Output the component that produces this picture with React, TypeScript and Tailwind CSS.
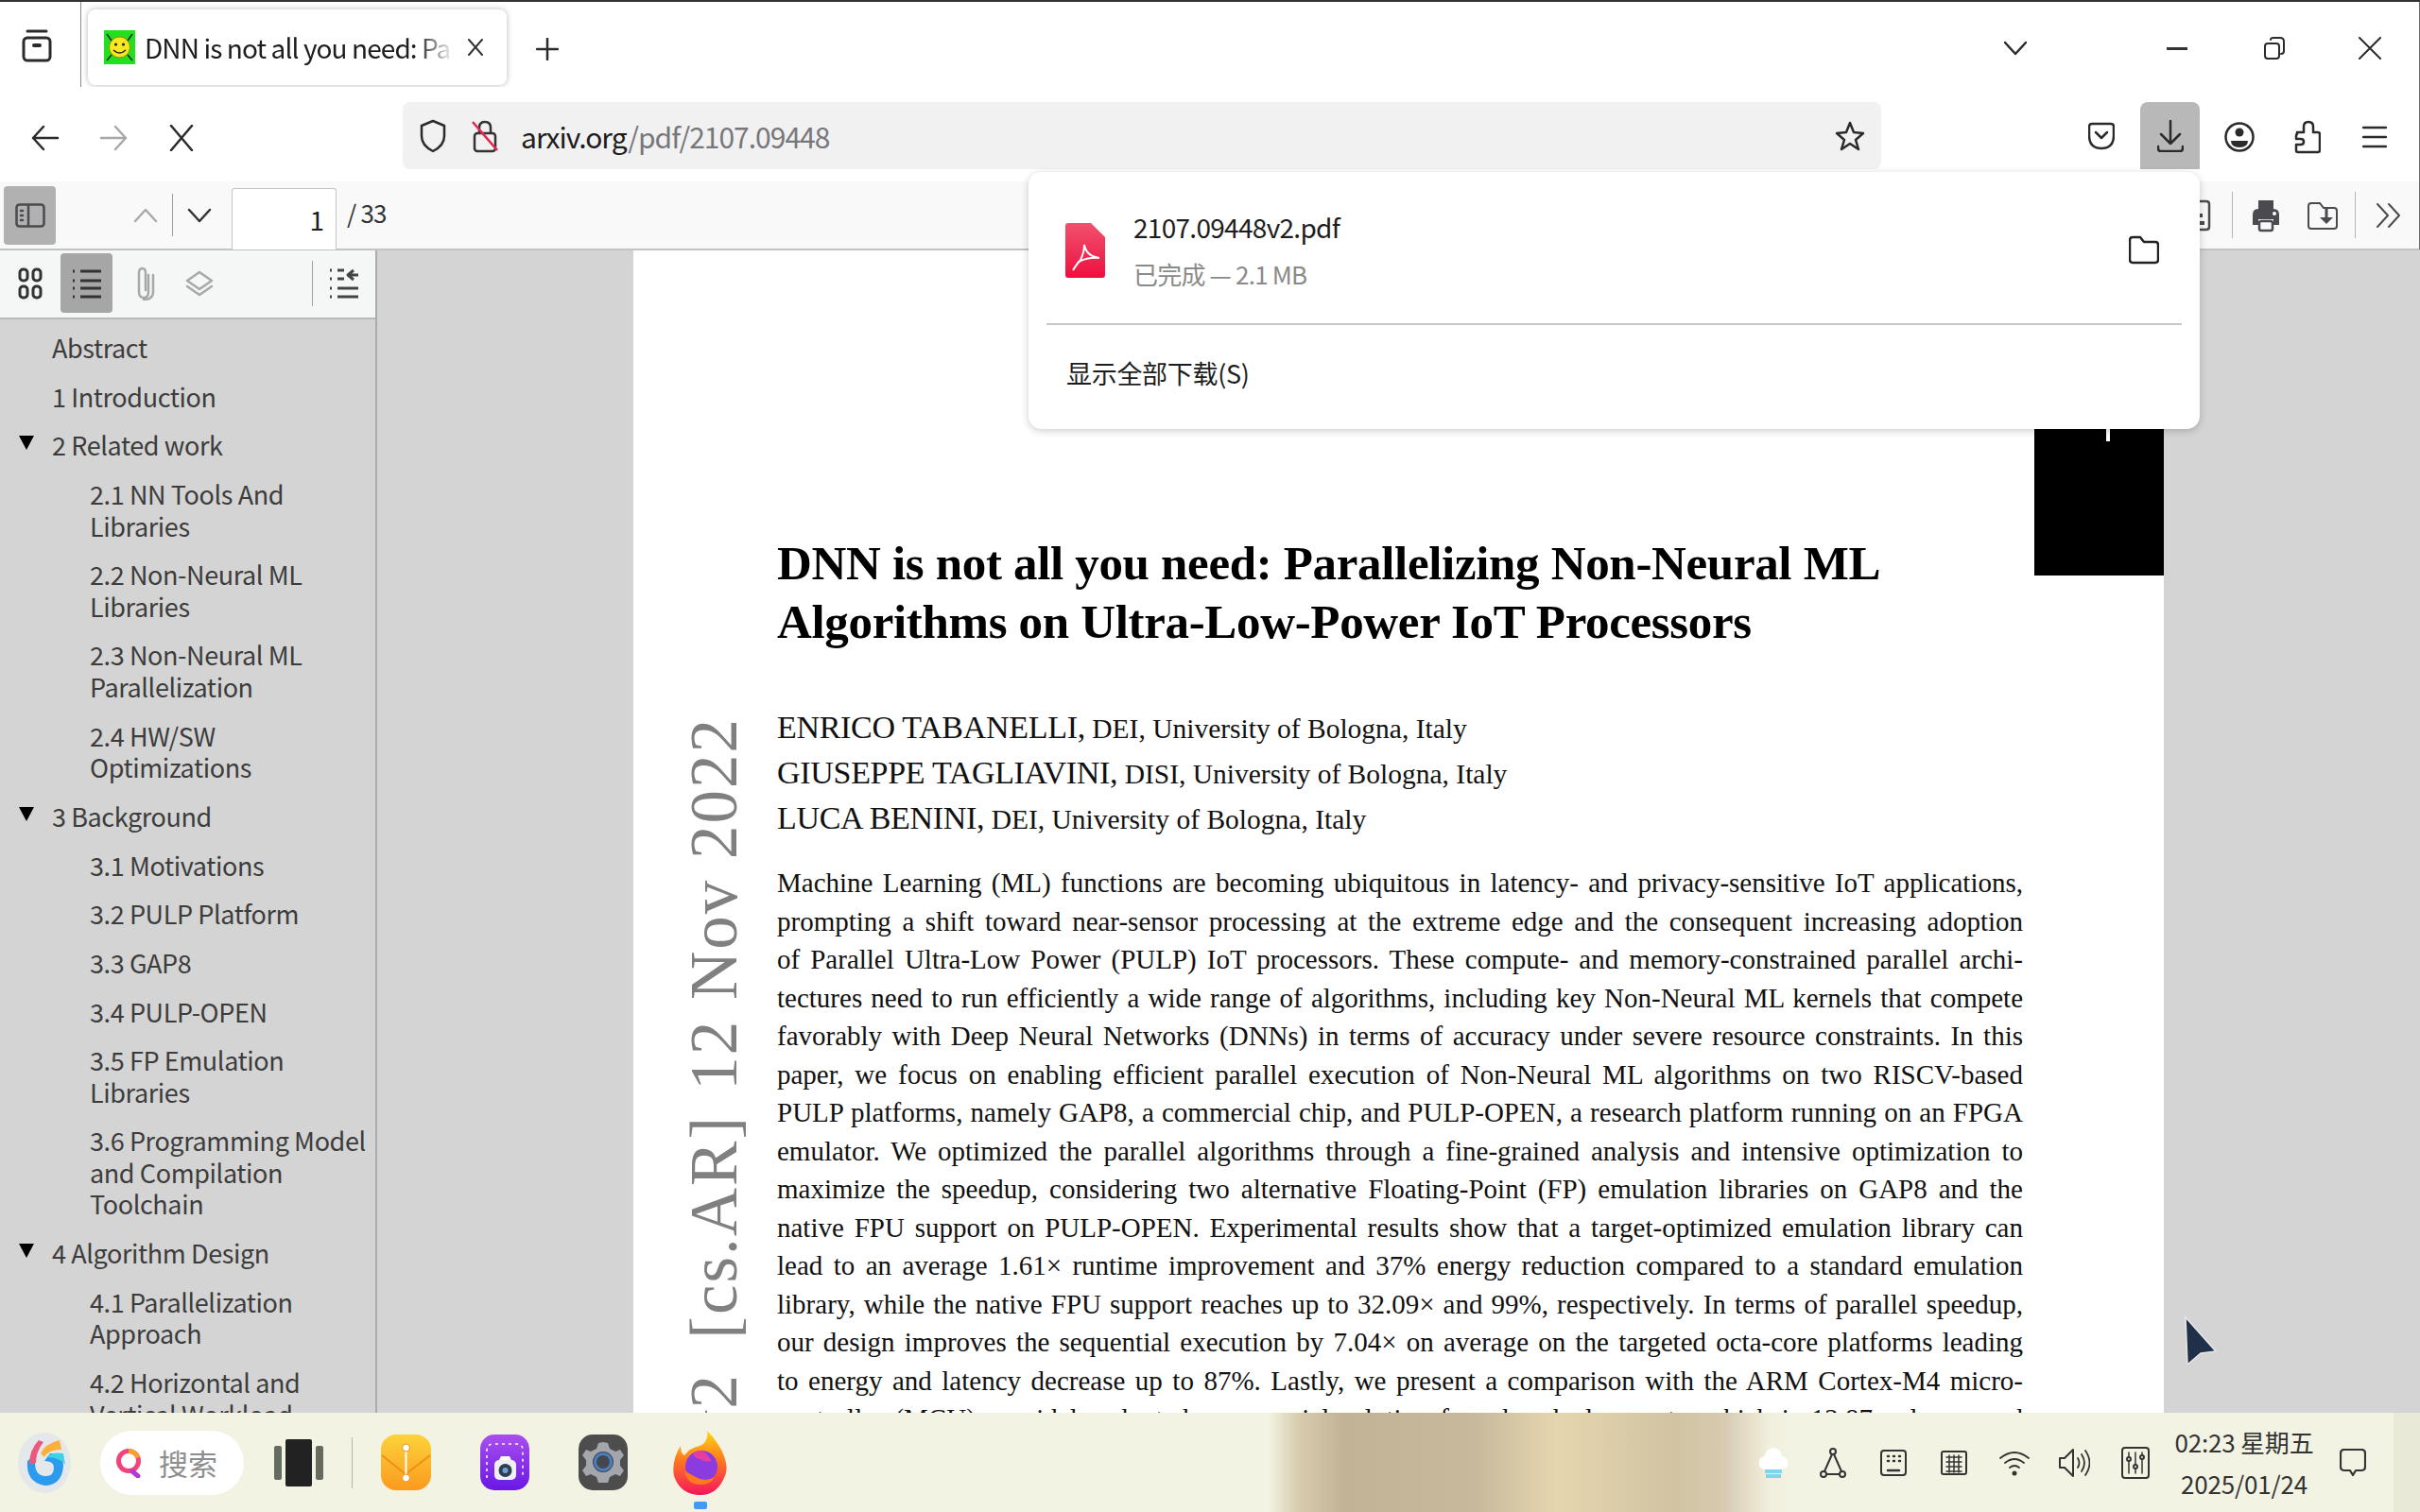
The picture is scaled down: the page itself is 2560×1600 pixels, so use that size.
import { ReactNode } from "react";

const UI_FONT = "font-['Noto_Sans_CJK_SC','Noto_Sans',sans-serif]";

type Toc = { label: string[]; depth: 0 | 1; open?: boolean };

const toc: Toc[] = [
  { label: ["Abstract"], depth: 0 },
  { label: ["1 Introduction"], depth: 0 },
  { label: ["2 Related work"], depth: 0, open: true },
  { label: ["2.1 NN Tools And", "Libraries"], depth: 1 },
  { label: ["2.2 Non-Neural ML", "Libraries"], depth: 1 },
  { label: ["2.3 Non-Neural ML", "Parallelization"], depth: 1 },
  { label: ["2.4 HW/SW", "Optimizations"], depth: 1 },
  { label: ["3 Background"], depth: 0, open: true },
  { label: ["3.1 Motivations"], depth: 1 },
  { label: ["3.2 PULP Platform"], depth: 1 },
  { label: ["3.3 GAP8"], depth: 1 },
  { label: ["3.4 PULP-OPEN"], depth: 1 },
  { label: ["3.5 FP Emulation", "Libraries"], depth: 1 },
  { label: ["3.6 Programming Model", "and Compilation", "Toolchain"], depth: 1 },
  { label: ["4 Algorithm Design"], depth: 0, open: true },
  { label: ["4.1 Parallelization", "Approach"], depth: 1 },
  { label: ["4.2 Horizontal and", "Vertical Workload"], depth: 1 },
];

const abstractLines = [
  "Machine Learning (ML) functions are becoming ubiquitous in latency- and privacy-sensitive IoT applications,",
  "prompting a shift toward near-sensor processing at the extreme edge and the consequent increasing adoption",
  "of Parallel Ultra-Low Power (PULP) IoT processors. These compute- and memory-constrained parallel archi-",
  "tectures need to run efficiently a wide range of algorithms, including key Non-Neural ML kernels that compete",
  "favorably with Deep Neural Networks (DNNs) in terms of accuracy under severe resource constraints. In this",
  "paper, we focus on enabling efficient parallel execution of Non-Neural ML algorithms on two RISCV-based",
  "PULP platforms, namely GAP8, a commercial chip, and PULP-OPEN, a research platform running on an FPGA",
  "emulator. We optimized the parallel algorithms through a fine-grained analysis and intensive optimization to",
  "maximize the speedup, considering two alternative Floating-Point (FP) emulation libraries on GAP8 and the",
  "native FPU support on PULP-OPEN. Experimental results show that a target-optimized emulation library can",
  "lead to an average 1.61× runtime improvement and 37% energy reduction compared to a standard emulation",
  "library, while the native FPU support reaches up to 32.09× and 99%, respectively. In terms of parallel speedup,",
  "our design improves the sequential execution by 7.04× on average on the targeted octa-core platforms leading",
  "to energy and latency decrease up to 87%. Lastly, we present a comparison with the ARM Cortex-M4 micro-",
  "controller (MCU), a widely adopted commercial solution for edge deployments, which is 12.87× slower and",
];

function Icon({ w, h, box, children, className = "" }: { w: number; h: number; box: string; children: ReactNode; className?: string }) {
  return (
    <svg width={w} height={h} viewBox={box} fill="none" stroke="currentColor" strokeWidth="2" strokeLinecap="round" strokeLinejoin="round" className={`shrink-0 ${className}`}>
      {children}
    </svg>
  );
}

function TabBar() {
  return (
    <div className="flex h-[90px] shrink-0 items-start bg-white">
      <div className="flex h-[95px] w-[86px] shrink-0 items-center justify-center border-r border-[#8c8c8c] pr-[8px] text-[#2b2b2b]">
        <Icon w={32} h={36} box="0 0 32 36" className="mb-[4px]">
          <path d="M6 3h20" strokeWidth="3" />
          <rect x="2" y="10" width="28" height="24" rx="4" strokeWidth="3" />
          <path d="M13 18h6" strokeWidth="4" />
        </Icon>
      </div>
      <div className="mt-[8px] ml-[7px] flex h-[80px] w-[443px] shrink-0 items-center rounded-[8px] bg-white pl-[17px] shadow-[0_0_6px_rgba(0,0,0,0.28)]">
        <svg width="33" height="36" viewBox="0 0 33 36" className="shrink-0">
          <rect width="33" height="36" fill="#22e01c" />
          <circle cx="16.5" cy="18" r="11" fill="#f7e81f" stroke="#8c8a10" />
          <circle cx="12.5" cy="15" r="1.6" fill="#222" />
          <circle cx="20.5" cy="15" r="1.6" fill="#222" />
          <path d="M10 21q6.5 6 13 0" stroke="#222" strokeWidth="1.5" fill="none" />
          <path d="M3 4l5 7M30 4l-5 7M3 32l5-6M30 32l-5-6" stroke="#224" strokeWidth="1.5" />
        </svg>
        <span className={`ml-[10px] w-[327px] shrink-0 overflow-hidden whitespace-nowrap text-[28px] leading-[40px] tracking-[-0.9px] text-[#1d1d1d] [mask-image:linear-gradient(90deg,#000_88%,transparent_100%)] ${UI_FONT}`}>
          DNN is not all you need: Parallelizing
        </span>
        <Icon w={18} h={18} box="0 0 18 18" className="ml-[14px] text-[#333]">
          <path d="M2 1l14 16M16 1L2 17" />
        </Icon>
      </div>
      <div className="mt-[38px] ml-[31px] text-[#2b2b2b]">
        <Icon w={24} h={24} box="0 0 24 24">
          <path d="M12 1v22M1 12h22" strokeWidth="2.5" />
        </Icon>
      </div>
      <div className="mt-[36px] ml-auto flex items-center text-[#2b2b2b]">
        <Icon w={24} h={16} box="0 0 24 16">
          <path d="M1 2l11 12L23 2" strokeWidth="2.5" />
        </Icon>
        <div className="ml-[148px] h-[3px] w-[22px] self-center bg-[#333]" />
        <Icon w={24} h={26} box="0 0 24 26" className="ml-[80px]">
          <rect x="2" y="8" width="15" height="16" rx="3" />
          <path d="M8 4q0-2 3-2h7q4 0 4 4v10q0 3-3 3" />
        </Icon>
        <Icon w={24} h={24} box="0 0 24 24" className="ml-[77px] mr-[41px]">
          <path d="M1 1l22 22M23 1L1 23" />
        </Icon>
      </div>
    </div>
  );
}

function NavBar() {
  return (
    <div className="flex h-[100px] shrink-0 items-start bg-white text-[#2b2b2b]">
      <div className="ml-[33px] mt-[40px] flex items-center">
        <Icon w={30} h={28} box="0 0 30 28">
          <path d="M28 14H2M13 2L2 14l11 12" strokeWidth="2.5" />
        </Icon>
        <Icon w={30} h={28} box="0 0 30 28" className="ml-[42px] text-[#a8a8a8]">
          <path d="M2 14h26M17 2l11 12-11 12" strokeWidth="2.5" />
        </Icon>
        <Icon w={26} h={28} box="0 0 26 28" className="ml-[44px]">
          <path d="M2 1l22 26M24 1L2 27" strokeWidth="2.5" />
        </Icon>
      </div>
      <div className="ml-[221px] mt-[16px] flex h-[71px] w-[1564px] shrink-0 items-center rounded-[8px] bg-[#f1f1f2] pl-[17px]">
        <Icon w={30} h={36} box="0 0 30 36">
          <path d="M15 2l12 5v11q0 10-12 16Q3 28 3 18V7z" strokeWidth="2.5" />
        </Icon>
        <svg width="30" height="36" viewBox="0 0 30 36" fill="none" className="ml-[25px] shrink-0">
          <rect x="4" y="15" width="22" height="19" rx="3" stroke="#333" strokeWidth="2.5" />
          <path d="M9 15V9q0-6 6-6t6 6v6" stroke="#333" strokeWidth="2.5" />
          <path d="M2 3l26 30" stroke="#e22850" strokeWidth="2.5" />
        </svg>
        <span className={`ml-[23px] text-[30px] leading-[44px] tracking-[-1px] text-[#1d1d1d] ${UI_FONT}`}>
          arxiv.org<span className="text-[#77777b]">/pdf/2107.09448</span>
        </span>
        <Icon w={32} h={34} box="0 0 32 34" className="ml-auto mr-[17px]">
          <path d="M16 3l4 10 10 1-8 7 3 10-9-6-9 6 3-10-8-7 10-1z" strokeWidth="2.5" />
        </Icon>
      </div>
      <div className="ml-[219px] mt-[37px] shrink-0">
        <Icon w={28} h={30} box="0 0 28 30">
          <path d="M4 2h20q3 0 3 3v9q0 14-13 14T1 14V5q0-3 3-3z" strokeWidth="2.5" />
          <path d="M8 11l6 6 6-6" strokeWidth="2.5" />
        </Icon>
      </div>
      <div className="ml-[27px] mt-[16px] flex h-[71px] w-[63px] shrink-0 items-center justify-center rounded-t-[8px] bg-[#b8b8b8]">
        <Icon w={28} h={34} box="0 0 28 34">
          <path d="M14 1v24M4 15l10 10 10-10M1 28v2q0 3 3 3h20q3 0 3-3v-2" strokeWidth="2.5" />
        </Icon>
      </div>
      <div className="ml-[26px] mt-[35px] flex shrink-0 items-center">
        <svg width="32" height="34" viewBox="0 0 32 34" fill="none">
          <circle cx="16" cy="17" r="14.5" stroke="#2b2b2b" strokeWidth="2.5" />
          <circle cx="16" cy="12" r="4.5" fill="#2b2b2b" />
          <path d="M7 21h18q0 7-9 7t-9-7z" fill="#2b2b2b" />
        </svg>
        <Icon w={28} h={36} box="0 0 28 36" className="ml-[42px]">
          <path d="M3 13h7V7q0-5 5-5t5 5v6h5q2 0 2 2v17q0 2-2 2H4q-2 0-2-2v-6h5q3 0 3-3t-3-3H2v-3q0-2 1-2z" strokeWidth="2.5" />
        </Icon>
        <Icon w={26} h={24} box="0 0 26 24" className="ml-[44px]">
          <path d="M1 2h24M1 12h24M1 22h24" strokeWidth="2.5" />
        </Icon>
      </div>
    </div>
  );
}

function PdfToolbar() {
  return (
    <div className="flex h-[73px] shrink-0 items-start border-b-[2px] border-[#c2c2c2] bg-[#f9f9fa] text-[#4a4a4f]">
      <div className="ml-[4px] mt-[5px] flex h-[62px] w-[55px] shrink-0 items-center justify-center rounded-[4px] bg-[#b1b1b1]">
        <Icon w={32} h={26} box="0 0 32 26">
          <rect x="1.5" y="1.5" width="29" height="23" rx="3" strokeWidth="2.5" />
          <path d="M14 2v22M6 8h2M6 13h2M6 18h2" strokeWidth="2.5" />
        </Icon>
      </div>
      <div className="ml-[82px] mt-[13px] flex items-center">
        <Icon w={26} h={16} box="0 0 26 16" className="text-[#aaaaaa]">
          <path d="M2 14L13 2l11 12" strokeWidth="2.5" />
        </Icon>
        <div className="ml-[15px] h-[45px] w-[1px] bg-[#9d9d9d]" />
        <Icon w={26} h={16} box="0 0 26 16" className="ml-[15px] text-[#333]">
          <path d="M2 2l11 12L24 2" strokeWidth="2.5" />
        </Icon>
      </div>
      <div className={`ml-[21px] mt-[7px] flex h-[65px] w-[111px] shrink-0 items-end justify-end rounded-t-[3px] border border-b-0 border-[#c4c4c4] bg-white pr-[12px] pb-[12px] text-[28px] leading-[40px] text-[#1d1d1d] ${UI_FONT}`}>
        1
      </div>
      <div className={`ml-[11px] mt-[13px] text-[26px] leading-[40px] tracking-[-0.8px] text-[#333] ${UI_FONT}`}>/ 33</div>
      <div className="ml-auto mt-[11px] flex items-center">
        <svg width="14" height="36" viewBox="0 0 14 36" fill="none" className="mr-[22px] shrink-0">
          <path d="M0 3h9q3 0 3 3v24q0 3-3 3H0" stroke="#4a4a4f" strokeWidth="2.5" />
          <path d="M0 16h5v4H0zM0 24h7v4H0z" fill="#4a4a4f" />
        </svg>
        <div className="mr-[20px] h-[49px] w-[1px] bg-[#b5b5b5]" />
        <svg width="30" height="36" viewBox="0 0 30 36" className="shrink-0 text-[#4a4a4f]">
          <path d="M7 2h16v9H7zM1 17q0-6 6-6h16q6 0 6 6v11h-6v-6H7v6H1z" fill="currentColor" />
          <rect x="8" y="24" width="14" height="10" rx="2" fill="none" stroke="currentColor" strokeWidth="2.5" />
          <circle cx="24" cy="16" r="2" fill="#fff" />
        </svg>
        <svg width="32" height="30" viewBox="0 0 32 30" fill="none" className="ml-[29px] shrink-0">
          <path d="M4 2h9l4 5h11q3 0 3 3v16q0 3-3 3H4q-3 0-3-3V5q0-3 3-3z" stroke="#4a4a4f" strokeWidth="2" />
          <path d="M20 7v13" stroke="#4a4a4f" strokeWidth="3" />
          <path d="M13 17h14l-7 7z" fill="#4a4a4f" />
        </svg>
        <div className="ml-[18px] h-[49px] w-[1px] bg-[#b5b5b5]" />
        <Icon w={27} h={28} box="0 0 27 28" className="ml-[21px] mr-[20px]">
          <path d="M2 2l11 12L2 26M14 2l11 12-11 12" strokeWidth="2" />
        </Icon>
      </div>
    </div>
  );
}

function SidebarTools() {
  return (
    <div className="flex h-[73px] shrink-0 items-center border-b-[2px] border-[#b8b8b8] bg-[#f5f6f6] pb-[2px] text-[#4a4a4f]">
      <svg width="26" height="34" viewBox="0 0 26 34" fill="none" className="ml-[19px] shrink-0" stroke="#333" strokeWidth="3">
        <rect x="2" y="2" width="8" height="12" rx="3.5" />
        <rect x="16" y="2" width="8" height="12" rx="3.5" />
        <rect x="2" y="20" width="8" height="12" rx="3.5" />
        <rect x="16" y="20" width="8" height="12" rx="3.5" />
      </svg>
      <div className="ml-[19px] flex h-[63px] w-[55px] shrink-0 items-center justify-center rounded-[4px] bg-[#a6a6a6]">
        <Icon w={32} h={32} box="0 0 32 32" className="text-[#333]">
          <path d="M9 3h22M9 13h22M9 21h22M9 30h22M1 3h2M1 13h2M1 21h2M1 30h2" strokeWidth="3" strokeLinecap="butt" />
        </Icon>
      </div>
      <Icon w={24} h={36} box="0 0 24 36" className="ml-[21px] text-[#a8a8a8]">
        <path d="M17 9v18q0 6-5 6t-5-6V7q0-5 3.500-5T14 7v18" strokeWidth="2.5" />
        <path d="M22 9v18q0 8-10 8" strokeWidth="2.5" />
      </Icon>
      <Icon w={30} h={28} box="0 0 30 28" className="ml-[32px] text-[#a8a8a8]">
        <path d="M15 2l13 9-13 9-13-9zM2 17l13 9 13-9" strokeWidth="2.5" />
      </Icon>
      <div className="ml-[104px] h-[48px] w-[1px] bg-[#a0a0a0]" />
      <Icon w={32} h={33} box="0 0 32 33" className="ml-[17px] text-[#444]">
        <path d="M9 3h7M9 12h7M1 3h2M1 12h2M1 22h2M1 31h2M9 22h22M9 31h22" strokeWidth="3" strokeLinecap="butt" />
        <path d="M31 8H21M26 3l-6 5 6 5" strokeWidth="3" strokeLinecap="butt" />
      </Icon>
    </div>
  );
}

function Sidebar() {
  return (
    <aside className="flex w-[399px] shrink-0 flex-col overflow-hidden border-r-[2px] border-[#ababab] bg-[#d4d4d4]">
      <SidebarTools />
      <div className={`pt-[13px] text-[27px] leading-[33.5px] tracking-[-0.4px] text-[#3c3c3c] ${UI_FONT}`}>
        {toc.map((item) => (
          <div key={item.label[0]} className={`relative mb-[18.2px] whitespace-nowrap ${item.depth === 0 ? "pl-[55px]" : "pl-[95px]"}`}>
            {item.open && <span className="absolute top-[7px] left-[20px] h-0 w-0 border-x-[8px] border-t-[15px] border-x-transparent border-t-black" />}
            {item.label.map((line) => (
              <div key={line}>{line}</div>
            ))}
          </div>
        ))}
      </div>
    </aside>
  );
}

function PdfPage() {
  return (
    <div className="relative mx-auto h-[1300px] w-[1619px] bg-white pt-[300px] pl-[152px] font-['Liberation_Serif',serif] text-black">
      <div className="absolute top-[189px] right-0 h-[155px] w-[137px] bg-black">
        <div className="absolute top-0 left-[76px] h-[13px] w-[4px] bg-white" />
      </div>
      <div className="absolute top-[494px] left-[55px] rotate-180 whitespace-pre text-[71px] leading-[60px] tracking-[2px] text-[#808080] [word-spacing:1px] [writing-mode:vertical-rl]">
        arXiv:2107.09448v2 <span className="ms-[16px]">[cs.AR]</span> <span className="ms-[5px]">12 Nov 2022</span>
      </div>
      <h1 className="text-[51px] leading-[62px] font-bold tracking-[-0.33px] whitespace-nowrap">
        <div>DNN is not all you need: Parallelizing Non-Neural ML</div>
        <div>Algorithms on Ultra-Low-Power IoT Processors</div>
      </h1>
      <div className="mt-[58px] text-[29.5px] leading-[48px] whitespace-nowrap text-[#111]">
        <div><span className="text-[34px] leading-none tracking-[-0.3px]">ENRICO TABANELLI,</span> DEI, University of Bologna, Italy</div>
        <div><span className="text-[34px] leading-none tracking-[-0.3px]">GIUSEPPE TAGLIAVINI,</span> DISI, University of Bologna, Italy</div>
        <div><span className="text-[34px] leading-none tracking-[-0.3px]">LUCA BENINI,</span> DEI, University of Bologna, Italy</div>
      </div>
      <div className="mt-[23px] w-[1318px] text-[29px] leading-[40.5px] text-[#111]">
        {abstractLines.map((line) => (
          <div key={line} className="whitespace-nowrap text-justify [text-align-last:justify]">{line}</div>
        ))}
      </div>
    </div>
  );
}

function DownloadPanel() {
  return (
    <div className={`absolute top-[180px] left-[1088px] z-10 h-[272px] w-[1239px] rounded-[14px] bg-white px-[19px] shadow-[0_2px_8px_rgba(0,0,0,0.2)] ${UI_FONT}`}>
      <div className="flex h-[162px] items-center border-b-[2px] border-[#c8c8c8] pt-[5px] pl-[19px] pr-[24px]">
        <svg width="44" height="60" viewBox="0 0 44 60" className="shrink-0">
          <defs>
            <linearGradient id="pdf" x1="0" y1="0" x2="0" y2="1">
              <stop offset="0" stopColor="#f0526d" />
              <stop offset="1" stopColor="#ee0f3f" />
            </linearGradient>
          </defs>
          <path d="M4 1h24l15 15v40q0 3-3 3H4q-3 0-3-3V4q0-3 3-3z" fill="url(#pdf)" />
          <path d="M21 24q2 12 16 14-12-1-22 4-3 4-6 9 4-6 8-11 4-8 4-16z" fill="none" stroke="#fff" strokeWidth="2" />
        </svg>
        <div className="ml-[29px]">
          <div className="text-[28px] leading-[40px] tracking-[-0.7px] text-[#1d1d1d]">2107.09448v2.pdf</div>
          <div className="mt-[10px] text-[26px] leading-[40px] tracking-[-0.8px] text-[#8a8a8a]">已完成 — 2.1 MB</div>
        </div>
        <Icon w={32} h={31} box="0 0 32 31" className="ml-auto text-[#222]">
          <path d="M4 2h8l4 5h12q3 0 3 3v16q0 3-3 3H4q-3 0-3-3V5q0-3 3-3z" strokeWidth="2.5" />
        </Icon>
      </div>
      <div className="flex h-[108px] items-center pl-[21px] pb-[6px] text-[27px] leading-[40px] tracking-[-0.3px] text-[#1d1d1d]">显示全部下载(S)</div>
    </div>
  );
}

function Taskbar() {
  return (
    <footer className={`flex h-[105px] shrink-0 items-center bg-[#f3f3e3] bg-[linear-gradient(90deg,#f3f3e3_0%,#f3f3e3_52.4%,#d9cdb0_53.6%,#c2b397_55.5%,#c8b99c_61%,#e6d6ae_64.3%,#d2c3a3_69.1%,#d6cab0_71.2%,#f1efdd_73.1%,#f3f3e3_74%,#f3f3e3_100%)] ${UI_FONT}`}>
      <svg width="56" height="64" viewBox="0 0 56 64" className="ml-[19px] shrink-0">
        <ellipse cx="28" cy="32" rx="28" ry="32" fill="#e5e8ea" />
        <path d="M10 30q-2 22 18 26 18 0 20-20 0-14-14-14l-6 8q10 0 10 7 0 10-10 9-10-1-10-14 0-6 2-10z" fill="#2b9bef" />
        <path d="M12 34q0-16 10-26l5 2q-8 10-8 22z" fill="#ea5a7e" />
        <path d="M24 22q4-10 20-14l2 10q-14 0-18 8z" fill="#fbb03b" />
        <path d="M30 26q6-6 18-4l2 12q-6-8-20-8z" fill="#3ed2e4" />
      </svg>
      <div className="ml-[31px] flex h-[68px] w-[152px] shrink-0 items-center rounded-full bg-white pl-[16px] text-[31px] leading-[40px] text-[#8e8e8e]">
        <svg width="28" height="32" viewBox="0 0 28 32" fill="none" className="shrink-0">
          <circle cx="14" cy="14" r="10.500" stroke="#f0447a" strokeWidth="5" />
          <path d="M14 3.500a10.500 10.500 0 0 1 10 7" stroke="#f9a12f" strokeWidth="5" />
          <path d="M18 25l6 5" stroke="#b43ad6" strokeWidth="5" strokeLinecap="round" />
        </svg>
        <span className="ml-[18px] whitespace-nowrap">搜索</span>
      </div>
      <div className="ml-[32px] flex shrink-0 items-center gap-[4px]">
        <div className="h-[36px] w-[8px] rounded-[2px] bg-[#666b5f]" />
        <div className="h-[50px] w-[28px] rounded-[2px] bg-[#222222]" />
        <div className="h-[36px] w-[8px] rounded-[2px] bg-[#666b5f]" />
      </div>
      <div className="ml-[30px] h-[54px] w-[1px] bg-[#b5b5a8]" />
      <svg width="53" height="59" viewBox="0 0 53 59" className="ml-[30px] shrink-0">
        <defs>
          <linearGradient id="mail" x1="0" y1="0" x2="0" y2="1">
            <stop offset="0" stopColor="#fdd33a" />
            <stop offset="1" stopColor="#fb9a1e" />
          </linearGradient>
        </defs>
        <rect width="53" height="59" rx="16" fill="url(#mail)" />
        <path d="M1 22l25 20 26-20" stroke="#f08f15" strokeWidth="2" fill="none" />
        <path d="M26.500 14v32" stroke="#fff" strokeWidth="2" />
        <circle cx="26.500" cy="14" r="4" fill="#fff" stroke="#f08f15" />
        <circle cx="26.500" cy="46" r="4" fill="#fff" stroke="#f08f15" />
      </svg>
      <svg width="52" height="59" viewBox="0 0 52 59" className="ml-[52px] shrink-0">
        <defs>
          <linearGradient id="cam" x1="0" y1="0" x2="0" y2="1">
            <stop offset="0" stopColor="#a94ff0" />
            <stop offset="1" stopColor="#6a18e4" />
          </linearGradient>
        </defs>
        <rect width="52" height="59" rx="15" fill="url(#cam)" />
        <path d="M7 46V17q0-7 7-7h24q7 0 7 7v29" fill="none" stroke="#fff" strokeWidth="1.5" strokeDasharray="3 4" />
        <rect x="15" y="27" width="23" height="21" rx="5" fill="#eef0f5" />
        <path d="M20 27l2-4h9l2 4" fill="#fff" />
        <circle cx="26.500" cy="38" r="7" fill="#2f3d52" />
        <circle cx="26.500" cy="38" r="3" fill="#6fa0d8" />
      </svg>
      <svg width="52" height="59" viewBox="0 0 52 59" className="ml-[52px] shrink-0">
        <rect width="52" height="59" rx="15" fill="#4d4d4d" />
        <path d="M26 8l5 1 2 6 6 3 5-2 4 6-4 5v6l4 5-4 6-5-2-6 3-2 6h-10l-2-6-6-3-5 2-4-6 4-5v-6l-4-5 4-6 5 2 6-3 2-6z" fill="#a3a6ad" />
        <circle cx="26" cy="29" r="11" fill="#46474d" />
        <circle cx="26" cy="29" r="8.500" fill="none" stroke="#4a7fc0" strokeWidth="3" />
      </svg>
      <div className="relative ml-[48px] h-[68px] w-[58px] shrink-0">
        <svg width="58" height="68" viewBox="0 0 58 68">
          <defs>
            <linearGradient id="fox" x1="0.5" y1="0" x2="0.5" y2="1">
              <stop offset="0" stopColor="#ffd90f" />
              <stop offset="0.45" stopColor="#ff7a1f" />
              <stop offset="1" stopColor="#f5155e" />
            </linearGradient>
          </defs>
          <path d="M36 0q10 10 16 22 8 18 2 28-8 18-25 18Q8 68 1 48-2 32 8 16q0 8 4 10Q18 18 28 16 38 12 36 0z" fill="url(#fox)" />
          <circle cx="30" cy="38" r="17" fill="#8c3be0" />
          <path d="M21 24q8-6 14 0l6 8q-8 2-12-2-6 0-8-6z" fill="#e33fa2" />
          <path d="M12 42q3 16 18 15 10 0 14-8-10 6-20 0-8-4-12-7z" fill="#ff7a1f" />
        </svg>
        <div className="absolute -bottom-[15px] left-[22px] h-[8px] w-[14px] rounded-[2px] bg-[#3f9bf5]" />
      </div>
      <svg width="30" height="32" viewBox="0 0 30 32" className="ml-[1091px] shrink-0">
        <path d="M7 23a7 7 0 0 1-1-14 9 9 0 0 1 18 0 7 7 0 0 1-1 14z" fill="#ffffff" />
        <path d="M6 23h18v4H6zM7 28h16v4H7z" fill="#7fd6e8" />
      </svg>
      <Icon w={28} h={32} box="0 0 28 32" className="ml-[34px] text-[#333]">
        <circle cx="14" cy="4" r="3" />
        <circle cx="4" cy="28" r="3" />
        <circle cx="24" cy="28" r="3" />
        <path d="M13 7L5 25M15 7l8 18M7 28h14" />
      </Icon>
      <Icon w={28} h={28} box="0 0 28 28" className="ml-[36px] text-[#333]">
        <rect x="1" y="1" width="26" height="26" rx="3" />
        <path d="M8 7h1M14 7h1M20 7h1M8 12h1M14 12h1M20 12h1M8 22h12" strokeWidth="2.500" />
      </Icon>
      <Icon w={28} h={28} box="0 0 28 28" className="ml-[36px] text-[#333]">
        <rect x="1" y="2" width="26" height="24" rx="2" />
        <path d="M6 8h16M6 13h16M6 18h16M6 23h16M9 6v18M14 6v18M19 6v18" strokeWidth="1.500" />
      </Icon>
      <Icon w={32} h={28} box="0 0 32 28" className="ml-[34px] text-[#333]">
        <path d="M1 9q15-12 30 0M6 14q10-8 20 0M11 19q5-4 10 0" strokeWidth="1.800" />
        <circle cx="16" cy="25" r="1.500" fill="currentColor" />
      </Icon>
      <Icon w={33} h={32} box="0 0 33 32" className="ml-[31px] text-[#333]">
        <path d="M1 11h5l9-9v28l-9-9H1z" />
        <path d="M20 11q3 5 0 10M24 7q6 9 0 18M28 3q9 13 0 26" strokeWidth="1.800" />
      </Icon>
      <Icon w={30} h={34} box="0 0 30 34" className="ml-[33px] text-[#333]">
        <rect x="1" y="1" width="28" height="32" rx="3" />
        <path d="M8 6v22M15 6v22M22 6v22" strokeWidth="1.500" />
        <circle cx="8" cy="13" r="2" fill="#f3f3e3" />
        <circle cx="15" cy="21" r="2" fill="#f3f3e3" />
        <circle cx="22" cy="11" r="2" fill="#f3f3e3" />
      </Icon>
      <div className="ml-[25px] w-[150px] shrink-0 whitespace-nowrap text-center text-[26px] leading-[44px] tracking-[-0.2px] text-[#333]">
        <div>02:23 星期五</div>
        <div>2025/01/24</div>
      </div>
      <Icon w={28} h={30} box="0 0 28 30" className="ml-[26px] text-[#333]">
        <path d="M5 1h18q4 0 4 4v14q0 4-4 4h-6l-3 5-3-5H5q-4 0-4-4V5q0-4 4-4z" strokeWidth="2.200" />
      </Icon>
      <div className="ml-auto h-full w-[28px] bg-[#e9e9d8]" />
    </footer>
  );
}

export default function App() {
  return (
    <div className="relative flex h-[1600px] w-[2560px] flex-col overflow-hidden border-t-[2px] border-[#333] bg-white">
      <TabBar />
      <NavBar />
      <PdfToolbar />
      <DownloadPanel />
      <div className="flex min-h-0 flex-1">
        <Sidebar />
        <main className="min-w-0 flex-1 overflow-hidden bg-[#d4d4d4]">
          <PdfPage />
        </main>
      </div>
      <svg width="36" height="52" viewBox="0 0 36 52" className="absolute top-[1390px] left-[2310px]">
        <path d="M2 2l32 36-16 2-14 12z" fill="#1f3048" stroke="#e8e8e8" strokeWidth="1.500" />
      </svg>
      <div className="absolute top-0 right-0 h-[262px] w-[1px] bg-[#6b6b6b]" />
      <Taskbar />
    </div>
  );
}
